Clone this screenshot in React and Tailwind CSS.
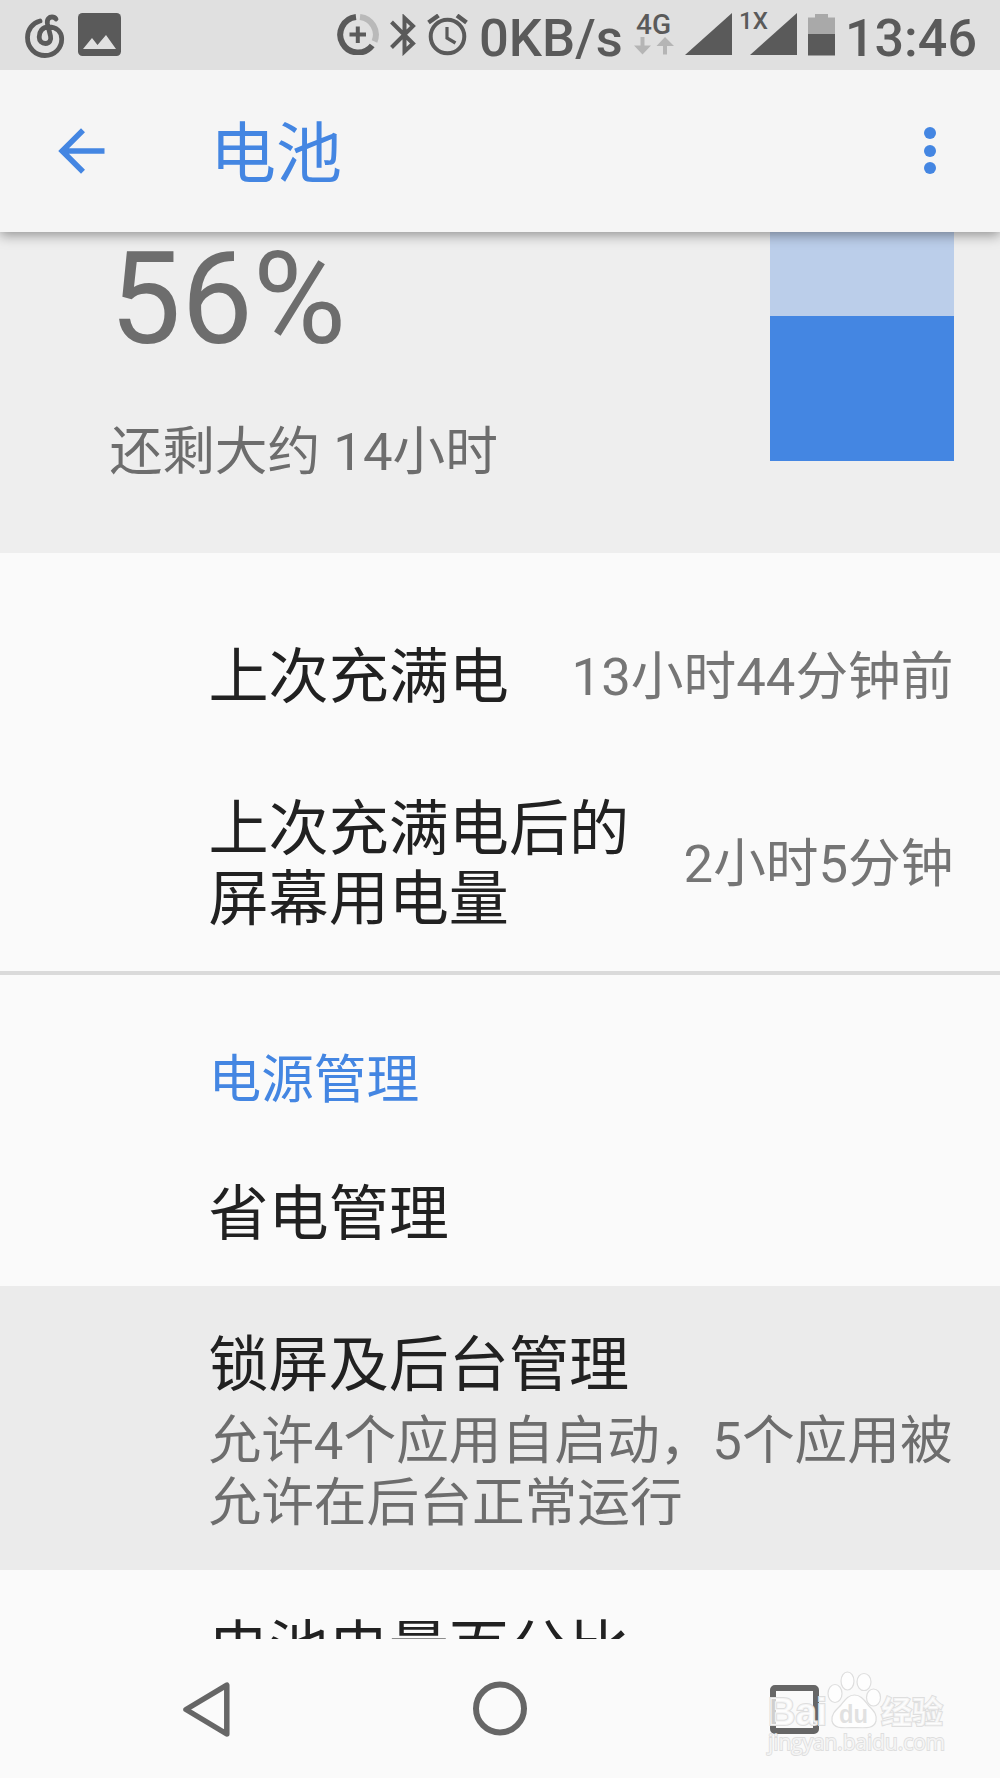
const Signal = () => (
  <svg className="block h-[42px] w-[47px]" viewBox="0 0 47 42" fill="#5a5a5a">
    <path d="M47 0V42H0z" />
  </svg>
);

function StatusBar() {
  return (
    <header className="relative z-20 flex h-[69.5px] shrink-0 items-start bg-[#e0e0e0] font-medium text-[#5a5a5a]">
      <svg className="ml-[25px] mt-[14px] h-[45px] w-[40px] shrink-0" viewBox="0 0 40 45" fill="none" stroke="#5a5a5a" strokeWidth="4.8" strokeLinecap="round">
        <path d="M15 7C7.500 9 2.500 15.500 2.500 23.500C2.500 34 10.500 41.500 20 41.500C30 41.500 36.700 34 36.700 25C36.700 17 31 13 23.500 13C17 13 14.200 18 14.200 23C14.200 27 17 29.500 20.500 29.500C24.500 29.500 26.500 26 25.500 22L22.500 10C21.500 5 24.500 3 27 3C29 3 30 3.500 31 5" />
      </svg>
      <svg className="ml-[13px] mt-[13px] h-[43px] w-[43px] shrink-0" viewBox="0 0 43 43">
        <rect width="43" height="43" rx="4.500" fill="#5a5a5a" />
        <path d="M5 36L14 25L19.500 32L28 22L38 36z" fill="#e0e0e0" />
      </svg>
      <svg className="ml-[216px] mt-[14px] h-[41px] w-[42px] shrink-0" viewBox="0 0 42 41" fill="none" strokeWidth="6">
        <path d="M19 3A17.800 17.800 0 1 0 35.200 31.500" stroke="#5a5a5a" />
        <path d="M23 3A17.800 17.800 0 0 1 37.500 27.500" stroke="#b9b9b9" />
        <path d="M12.500 20.500H29M20.800 12.500V29" stroke="#5a5a5a" strokeWidth="4" />
      </svg>
      <svg className="ml-[11px] mt-[14px] h-[42px] w-[26px] shrink-0" viewBox="0 0 26 42" fill="none" stroke="#5a5a5a" strokeWidth="4">
        <path d="M1.500 8L23 29.500L14.500 37.500V4L23 12L1.500 33.500" />
      </svg>
      <svg className="ml-[11px] mt-[14px] h-[42px] w-[42px] shrink-0" viewBox="0 0 42 42" fill="none" stroke="#5a5a5a" strokeWidth="4">
        <circle cx="20.500" cy="22.500" r="16.800" />
        <path d="M1.500 8.500L11.500 1.500M30 1.500L39.500 8.500" strokeWidth="4.500" />
        <path d="M20 13V24L28.500 29" strokeWidth="3.200" />
      </svg>
      <span className="ml-[10px] mt-[3px] w-[154px] shrink-0 whitespace-nowrap text-[52.5px] leading-[70px]">0KB/s</span>
      <div className="ml-[1px] mt-[13px] flex w-[42px] shrink-0 flex-col">
        <span className="h-[24px] whitespace-nowrap pl-[2px] text-[28px] leading-[24px]">4G</span>
        <svg className="h-[18px] w-[40px]" viewBox="0 0 40 18" fill="#b5b5b5">
          <path d="M6.500 0H10.500V8.500H17L8.500 17.500L0 8.500H6.500zM29 17.500H33V9H40L31 0L22.500 9H29z" />
        </svg>
      </div>
      <div className="ml-[9px] mt-[13px] shrink-0"><Signal /></div>
      <div className="relative ml-[18px] mt-[13px] shrink-0">
        <Signal />
        <span className="absolute -left-[11px] -top-[4px] text-[24px] font-medium leading-[24px]">1X</span>
      </div>
      <svg className="ml-[11px] mt-[14px] h-[42px] w-[27px] shrink-0" viewBox="0 0 27 42">
        <path d="M0 3.500H7V0H20V3.500H27V20H0z" fill="#a9a9a9" />
        <path d="M0 20H27V41.500H0z" fill="#5a5a5a" />
      </svg>
      <span className="ml-[10px] mt-[4px] whitespace-nowrap text-[52px] leading-[70px]">13:46</span>
    </header>
  );
}

function Toolbar() {
  return (
    <div className="relative z-10 flex h-[162px] shrink-0 items-center bg-[#f5f5f5] text-[#4486e2] shadow-[0_3px_12px_rgba(0,0,0,0.4)]">
      <svg className="ml-[58px] h-[46px] w-[47px]" viewBox="0 0 47 46" fill="none" stroke="currentColor" strokeWidth="5.600">
        <path d="M46.500 23H6M25 2.200L4.200 23L25 43.800" />
      </svg>
      <h1 className="ml-[105px] mt-[9px] text-[66px] leading-[80px]">电池</h1>
      <div className="ml-auto mr-[64px] flex flex-col gap-[5.4px]">
        <i className="size-[12px] rounded-full bg-current" />
        <i className="size-[12px] rounded-full bg-current" />
        <i className="size-[12px] rounded-full bg-current" />
      </div>
    </div>
  );
}

function BatterySummary() {
  return (
    <section className="flex h-[321.5px] shrink-0 justify-between bg-[#eeeeee] pl-[109.5px] pr-[46.5px] text-[#6d6d6d]">
      <div>
        <div className="pt-[3px] text-[127.500px] leading-[130px]">56%</div>
        <div className="mt-[54px] text-[52.7px] leading-[66px]">还剩大约 14小时</div>
      </div>
      <div className="flex h-[229.5px] w-[184px] flex-col bg-[#bbceea]">
        <div className="mt-auto h-[145.5px] bg-[#4486e2]" />
      </div>
    </section>
  );
}

function Row({ title, value, className }) {
  return (
    <div className={"flex shrink-0 items-center justify-between pl-[208.5px] pr-[46.5px] " + className}>
      <div className="whitespace-pre pt-[2px] text-[60.1px] leading-[70.5px] text-[#212121]">{title}</div>
      {value && <div className="whitespace-nowrap pt-[1.5px] text-[52.7px] text-[#757575]">{value}</div>}
    </div>
  );
}

function Watermark() {
  return (
    <svg className="absolute left-[760px] top-[25px] h-[100px] w-[200px]" viewBox="0 0 200 100" fill="#fff" fillOpacity="0.7" stroke="#dedede" strokeWidth="1.200">
      <text x="8" y="61" fontFamily="Liberation Sans" fontWeight="700" fontSize="38" textLength="59" lengthAdjust="spacingAndGlyphs" strokeWidth="2" paintOrder="stroke">Bai</text>
      <ellipse cx="75" cy="29.500" rx="7" ry="9" />
      <ellipse cx="87.500" cy="17" rx="6.500" ry="9" />
      <ellipse cx="104" cy="18" rx="7" ry="8.500" />
      <ellipse cx="113.500" cy="33.500" rx="7" ry="8.500" />
      <path d="M94.500 31C101 31 104 36 109 42C115 48 117 51 116 57C114 65 106 64 94 63.500C82 64 74 65 72 57C71 50 76 46 81 41C85 36 88 31 94.500 31z" />
      <text x="79" y="59" fill="#d4d4d4" stroke="none" fontFamily="Liberation Sans" fontWeight="700" fontSize="26" textLength="29" lengthAdjust="spacingAndGlyphs">du</text>
      <text x="121" y="59" fontFamily="Noto Sans CJK SC" fontWeight="700" fontSize="31" textLength="62" strokeWidth="2" paintOrder="stroke">经验</text>
      <text x="8" y="86" fontFamily="Open Sans" fontSize="21.500" textLength="177" lengthAdjust="spacingAndGlyphs" strokeWidth="1.800" paintOrder="stroke">jingyan.baidu.com</text>
    </svg>
  );
}

function NavigationBar() {
  return (
    <nav className="relative flex h-[139px] shrink-0 items-start bg-[#fafafa] pt-[42px]">
      <svg className="ml-[183px] h-[56px] w-[47px]" viewBox="0 0 47 56" fill="none" stroke="#666" strokeWidth="5.500" strokeLinejoin="round">
        <path d="M43.800 4.200V53L3 28.500z" />
      </svg>
      <svg className="ml-[243px] h-[55px] w-[54px]" viewBox="0 0 54 55" fill="none" stroke="#666" strokeWidth="6">
        <circle cx="27" cy="27.500" r="24" />
      </svg>
      <div className="ml-[243px] mt-[4px] size-[49px] rounded-[5px] border-[6px] border-[#666]" />
      <Watermark />
    </nav>
  );
}

export default function App() {
  return (
    <main lang="zh-CN" className="flex h-[1778px] w-[1000px] flex-col overflow-hidden bg-[#fafafa] font-['Roboto','Noto_Sans_CJK_SC',sans-serif]">
      <StatusBar />
      <Toolbar />
      <div className="flex h-[1407.5px] shrink-0 flex-col overflow-hidden">
        <BatterySummary />
        <Row className="mt-[44px] h-[160px]" title="上次充满电" value="13小时44分钟前" />
        <Row className="h-[214px]" title={"上次充满电后的\n屏幕用电量"} value="2小时5分钟" />
        <div className="h-[4px] shrink-0 bg-[#dadada]" />
        <h2 className="h-[167px] shrink-0 pl-[208.5px] pt-[72px] text-[52.7px] leading-[66px] text-[#4486e2]">电源管理</h2>
        <Row className="h-[144px]" title="省电管理" />
        <div className="h-[284px] shrink-0 bg-[#ebebeb] pl-[208.5px] pt-[44px]">
          <div className="text-[60.1px] leading-[71px] text-[#212121]">锁屏及后台管理</div>
          <div className="mt-[9px] whitespace-pre text-[52.7px] leading-[62px] text-[#6d6d6d]">{"允许4个应用自启动，5个应用被\n允许在后台正常运行"}</div>
        </div>
        <Row className="h-[158px]" title="电池电量百分比" />
      </div>
      <NavigationBar />
    </main>
  );
}
